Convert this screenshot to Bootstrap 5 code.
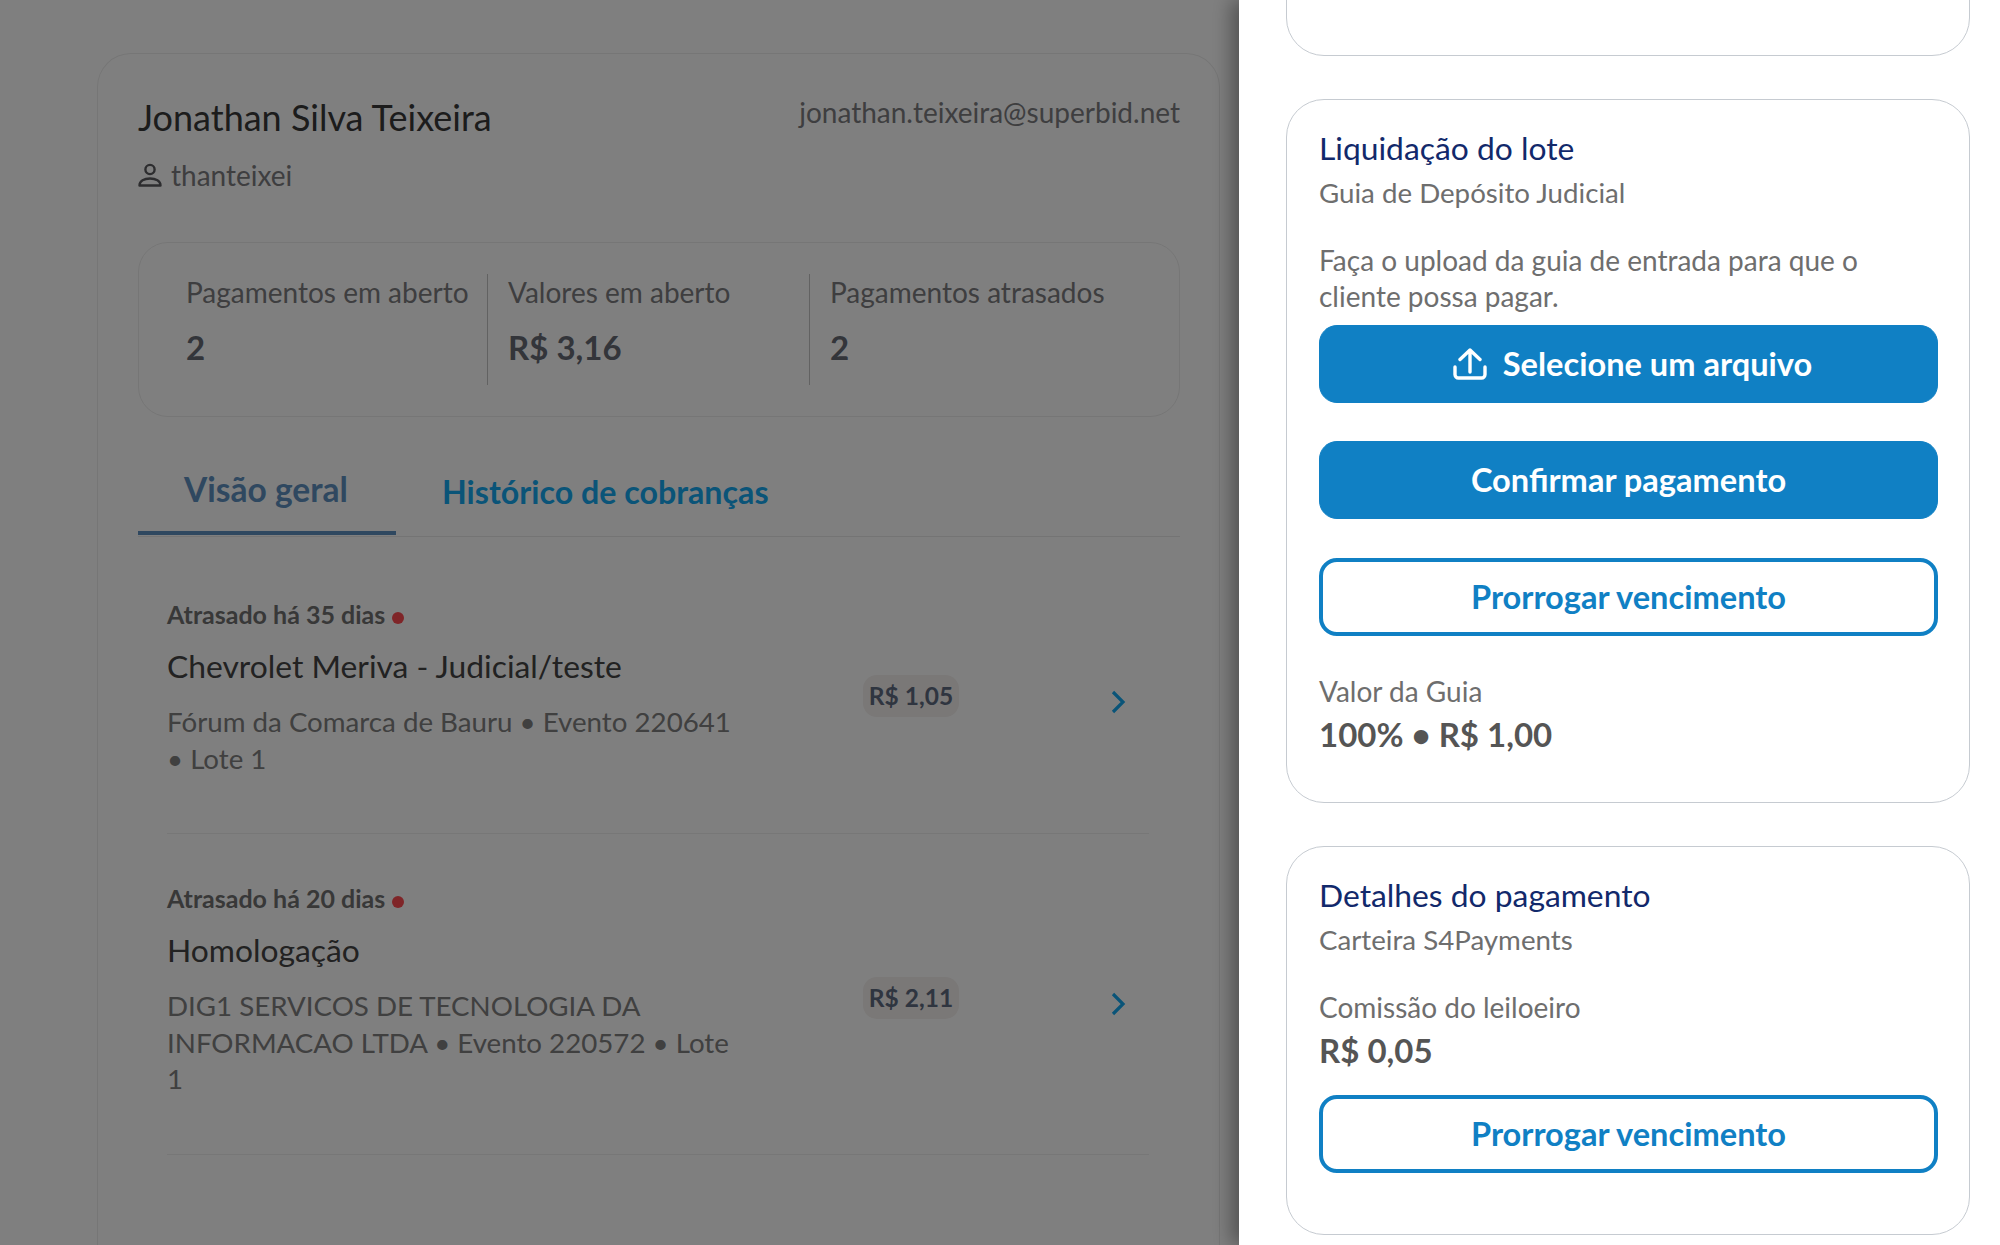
<!DOCTYPE html>
<html lang="pt-BR">
<head>
  <meta charset="UTF-8">
  <meta name="viewport" content="width=device-width, initial-scale=1.0">
  <title>Cobranças</title>
  <link rel="stylesheet" href="https://cdn.jsdelivr.net/npm/bootstrap@5.3.0/dist/css/bootstrap.min.css">
  <style>
    body { height: 1245px; overflow: hidden; background: #fff; font-family: "Lato", "Noto Sans", sans-serif; font-size: 26px; }

    /* fundo */
    .page-wrap { height: 1245px; overflow: hidden; padding: 53px 0 0 97px; }
    .user-card { width: 1123px; height: 1192px; overflow: hidden; border: 1px solid #ececec; border-bottom: 0; border-radius: 34px 34px 0 0; padding: 40px 39px 0 40px; background: transparent; }
    .user-name { font-size: 36px; line-height: 46px; color: #383838; }
    .user-mail { font-size: 28px; line-height: 36px; color: #7c7c80; }
    .user-login { font-size: 28px; line-height: 36px; color: #7c7c80; margin-top: 17px; }
    .user-login svg { margin-right: 9px; }
    .stats-box { margin-top: 49px; height: 175px; border: 1px solid #ececec; border-radius: 30px; padding: 31px 0 0 27px; }
    .stat-col { width: 322px; height: 111px; padding-left: 20px; border-right: 1px solid #c4c4c4; }
    .stat-col.no-line { border-right: 0; }
    .stat-label { font-size: 28px; line-height: 36px; color: #7c7c80; }
    .stat-value { font-size: 33px; line-height: 40px; font-weight: 700; color: #666a74; margin-top: 17px; }
    .tabs-bar { margin-top: 33px; border-bottom: 1px solid #e8e8e8; }
    .tabs-bar .nav-link { font-size: 32.200px; line-height: 40px; font-weight: 700; padding: 22px 0 0 46px; color: #14a8f0; }
    .tabs-bar .nav-link.active { width: 258px; font-size: 33.500px; padding: 19px 0 22px 46px; color: #5e90c0; border-bottom: 4px solid #5e90c0; margin-bottom: 1px; }

    .charge-row { margin: 0 31px 0 29px; padding-bottom: 56px; border-bottom: 1px solid #eee; }
    .charge-row.first { margin-top: 62px; }
    .charge-row.next { margin-top: 49px; }
    .charge-text { width: 696px; }
    .charge-status { font-size: 25px; line-height: 30px; font-weight: 700; color: #707070; }
    .status-dot { display: inline-block; width: 12px; height: 12px; border-radius: 50%; background: #ff4a50; margin-left: 1px; }
    .charge-title { font-size: 31.800px; line-height: 40px; color: #444; margin-top: 17px; }
    .charge-desc { font-size: 27.700px; line-height: 36.500px; color: #808080; margin-top: 18px; }
    .price-tag { width: 96px; height: 42px; border-radius: 14px; background: #f4f0ee; color: #5e6a80; font-size: 24.500px; font-weight: 700; margin-top: 16px; }
    .charge-arrow { margin: 27px 0 0 152px; }

    /* painel */
    .side-panel.offcanvas { --bs-offcanvas-width: 761px; border-left: 0; box-shadow: -8px 0 18px rgba(0,0,0,.35); }
    .page-shade.offcanvas-backdrop { opacity: .5; background: #000; }
    .panel-body { padding: 0 30px 0 47px; overflow: hidden; gap: 43px; }
    .info-card { border: 1.5px solid #c6cbd1; border-radius: 38px; padding: 28px 31px 0 32px; }
    .info-card.stub { height: 96px; margin-top: -40px; flex: none; }
    .info-card.pay-guide { height: 704px; flex: none; }
    .info-card.pay-details { height: 389px; flex: none; }
    .info-title { font-size: 31.800px; line-height: 40px; color: #12296b; }
    .info-sub { font-size: 27.700px; line-height: 36px; color: #6e6e6e; margin-top: 7px; }
    .info-text { font-size: 28px; line-height: 36px; color: #6e6e6e; margin-top: 31px; }
    .info-label { font-size: 28px; line-height: 36px; color: #6e6e6e; }
    .info-label.after-btn { margin-top: 37px; }
    .info-value { font-size: 33px; line-height: 40px; font-weight: 700; color: #555; margin-top: 5px; }
    .action-btn { height: 78px; border-radius: 18px; font-size: 32.600px; font-weight: 700; --bs-btn-bg: #1080c4; --bs-btn-border-color: #1080c4; --bs-btn-color: #fff; }
    .action-btn.ghost { --bs-btn-bg: #fff; --bs-btn-color: #1080c4; border-width: 4px; }
    .first-btn { margin-top: 11px; padding-left: 20px; }
    .gap-btn { margin-top: 38px; }
    .gap-btn.ghost { margin-top: 39px; }
    .last-btn { margin-top: 25px; }
    .upload-icon { margin-right: 16px; }
  </style>
</head>
<body>

  <div class="page-wrap">
    <div class="card user-card">
      <div class="d-flex justify-content-between align-items-start">
        <div class="user-name">Jonathan Silva Teixeira</div>
        <div class="user-mail">jonathan.teixeira@superbid.net</div>
      </div>
      <div class="user-login d-flex align-items-center">
        <svg width="24" height="24" viewBox="0 0 24 24" fill="none" stroke="#5a5a5e" stroke-width="2.4"><circle cx="12" cy="6.500" r="4.600"/><path d="M1.500 22.500c0-4.400 4.700-7 10.500-7s10.500 2.600 10.500 7z" stroke-linejoin="round"/></svg>
        <span>thanteixei</span>
      </div>

      <div class="stats-box d-flex">
        <div class="stat-col">
          <div class="stat-label">Pagamentos em aberto</div>
          <div class="stat-value">2</div>
        </div>
        <div class="stat-col">
          <div class="stat-label">Valores em aberto</div>
          <div class="stat-value">R$ 3,16</div>
        </div>
        <div class="stat-col no-line">
          <div class="stat-label">Pagamentos atrasados</div>
          <div class="stat-value">2</div>
        </div>
      </div>

      <nav class="nav tabs-bar">
        <a class="nav-link active" href="#">Visão geral</a>
        <a class="nav-link" href="#">Histórico de cobranças</a>
      </nav>

      <div class="charge-row first d-flex align-items-center">
        <div class="charge-text">
          <div class="charge-status">Atrasado há 35 dias <span class="status-dot"></span></div>
          <div class="charge-title">Chevrolet Meriva - Judicial/teste</div>
          <div class="charge-desc">Fórum da Comarca de Bauru • Evento 220641<br>• Lote 1</div>
        </div>
        <div class="price-tag d-flex align-items-center justify-content-center">R$ 1,05</div>
        <svg class="charge-arrow" width="15" height="24" viewBox="0 0 15 24" fill="none" stroke="#14a8f0" stroke-width="3.2"><path d="M2 2l10 10-10 10"/></svg>
      </div>

      <div class="charge-row next d-flex align-items-center">
        <div class="charge-text">
          <div class="charge-status">Atrasado há 20 dias <span class="status-dot"></span></div>
          <div class="charge-title">Homologação</div>
          <div class="charge-desc">DIG1 SERVICOS DE TECNOLOGIA DA<br>INFORMACAO LTDA • Evento 220572 • Lote<br>1</div>
        </div>
        <div class="price-tag d-flex align-items-center justify-content-center">R$ 2,11</div>
        <svg class="charge-arrow" width="15" height="24" viewBox="0 0 15 24" fill="none" stroke="#14a8f0" stroke-width="3.2"><path d="M2 2l10 10-10 10"/></svg>
      </div>
    </div>
  </div>

  <div class="offcanvas-backdrop show page-shade"></div>

  <div class="offcanvas offcanvas-end show side-panel" tabindex="-1" data-bs-backdrop="false">
    <div class="offcanvas-body panel-body d-flex flex-column">
      <div class="card info-card stub"></div>

      <div class="card info-card pay-guide">
        <div class="info-title">Liquidação do lote</div>
        <div class="info-sub">Guia de Depósito Judicial</div>
        <div class="info-text">Faça o upload da guia de entrada para que o<br>cliente possa pagar.</div>
        <button class="btn action-btn first-btn w-100 d-flex align-items-center justify-content-center">
          <svg class="upload-icon" width="34" height="32" viewBox="0 0 34 32" fill="none" stroke="#fff" stroke-width="3.4" stroke-linecap="round" stroke-linejoin="round"><path d="M2 19v7.500a3.500 3.500 0 0 0 3.500 3.500h23a3.500 3.500 0 0 0 3.500-3.500V19"/><path d="M17 24V2M7 11.500L17 2l10 9.500"/></svg>
          Selecione um arquivo
        </button>
        <button class="btn action-btn w-100 gap-btn">Confirmar pagamento</button>
        <button class="btn action-btn ghost w-100 gap-btn">Prorrogar vencimento</button>
        <div class="info-label after-btn">Valor da Guia</div>
        <div class="info-value">100% • R$ 1,00</div>
      </div>

      <div class="card info-card pay-details">
        <div class="info-title">Detalhes do pagamento</div>
        <div class="info-sub">Carteira S4Payments</div>
        <div class="info-label info-text">Comissão do leiloeiro</div>
        <div class="info-value">R$ 0,05</div>
        <button class="btn action-btn ghost w-100 last-btn">Prorrogar vencimento</button>
      </div>
    </div>
  </div>

  <script src="https://cdn.jsdelivr.net/npm/bootstrap@5.3.0/dist/js/bootstrap.bundle.min.js"></script>
</body>
</html>
